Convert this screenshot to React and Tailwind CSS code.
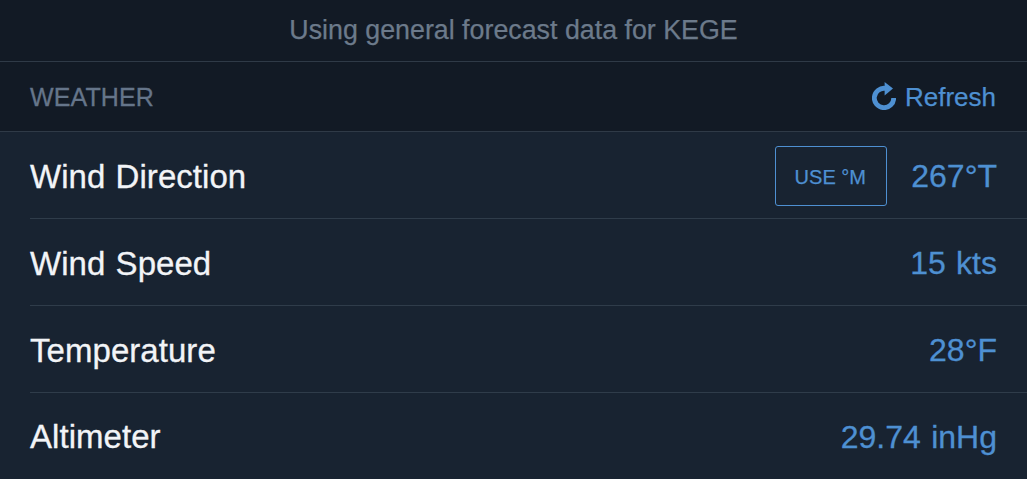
import React from 'react';

const RefreshIcon = () => (
  <svg width="24" height="28" viewBox="0 0 24 28" className="mt-[-3px] text-[#4e90d2]" fill="none">
    {/* open ring */}
    <path d="M13.5 6.4A9.7 9.7 0 1 0 21.7 16" stroke="currentColor" strokeWidth="4.8" />
    {/* arrow head */}
    <path d="M12.6 0L21 6.6L12.6 13.4Z" fill="currentColor" />
  </svg>
);

const rows = [
  { label: 'Wind Direction', value: '267°T', button: true },
  { label: 'Wind Speed', value: '15 kts' },
  { label: 'Temperature', value: '28°F' },
  { label: 'Altimeter', value: '29.74 inHg', last: true },
];

const Row = ({ label, value, button, last }) => (
  <div className={`flex h-[87px] items-center justify-between pr-[30px] ${last ? '' : 'border-b border-[#2f3c4a] pt-[2px]'}`}>
    <span className="text-[33px] leading-none tracking-[0.05px] text-[#f2f4f7] [word-spacing:1px] [-webkit-text-stroke:0.3px]">{label}</span>
    <div className="flex items-center gap-[24px]">
      {button && (
        <button className="flex h-[60px] w-[112px] items-center justify-center rounded-[3px] border border-[#4e90d2] pt-[2px] pr-[2px] text-[20px] text-[#4e90d2] [-webkit-text-stroke:0.25px]">
          USE °M
        </button>
      )}
      <span className="text-[32px] leading-none text-[#4e90d2] [word-spacing:1.5px] [-webkit-text-stroke:0.3px]">{value}</span>
    </div>
  </div>
);

export default function App() {
  return (
    <div className="h-[479px] w-[1027px] overflow-hidden bg-[#121a25] font-['Liberation_Sans',sans-serif]">
      {/* Forecast notice */}
      <div className="flex h-[62px] items-center justify-center border-b border-[#2f3a47] text-[26.8px] text-[#6c7a8b] [-webkit-text-stroke:0.25px]">
        Using general forecast data for KEGE
      </div>

      {/* Section header */}
      <div className="flex h-[70px] items-center justify-between border-b border-[#2f3a47] pl-[30px] pr-[31px] pt-[2px]">
        <span className="text-[25px] tracking-[0.1px] text-[#65758a] [-webkit-text-stroke:0.3px]">WEATHER</span>
        <button className="flex items-center gap-[9px] text-[26px] text-[#4e90d2] [-webkit-text-stroke:0.25px]">
          <RefreshIcon />
          Refresh
        </button>
      </div>

      {/* Weather rows */}
      <div className="bg-[#182331] pl-[30px]">
        {rows.map(r => (
          <Row key={r.label} {...r} />
        ))}
      </div>
    </div>
  );
}
